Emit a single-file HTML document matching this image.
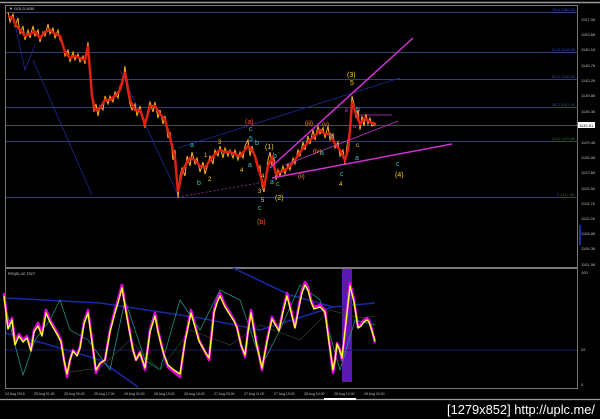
<!DOCTYPE html>
<html><head><meta charset="utf-8"><style>
html,body{margin:0;padding:0;background:#000;width:600px;height:419px;overflow:hidden}
svg{display:block}
text{font-family:"Liberation Sans",sans-serif}
</style></head><body>
<svg width="600" height="419" viewBox="0 0 600 419" xmlns="http://www.w3.org/2000/svg">
<rect width="600" height="419" fill="#000"/>
<line x1="0" y1="2.5" x2="600" y2="2.5" stroke="#9a9a9a" stroke-width="1.5"/>
<rect x="5.5" y="5.5" width="572" height="262" fill="none" stroke="#777" stroke-width="1"/>
<g stroke="#343f78" stroke-width="1">
<line x1="6" y1="12.5" x2="578" y2="12.5"/>
<line x1="6" y1="52.5" x2="578" y2="52.5"/>
<line x1="6" y1="79.5" x2="578" y2="79.5"/>
<line x1="6" y1="107.5" x2="578" y2="107.5"/>
<line x1="6" y1="141.5" x2="578" y2="141.5"/>
<line x1="6" y1="197.5" x2="578" y2="197.5"/>
</g>
<line x1="6" y1="125.5" x2="578" y2="125.5" stroke="#999" stroke-width="0.6"/>
<g fill="#3050b0" font-size="4">
<text x="552" y="11">76.4 1160.25</text>
<text x="552" y="51">61.8 1149.95</text>
<text x="552" y="78">50.0 1140.63</text>
<text x="552" y="106">38.2 1137.40</text>
<text x="552" y="140">23.6 1129.85</text>
<text x="557" y="196">0 1117.35</text>
</g>
<g stroke="#1a2a9a" stroke-width="0.8" fill="none">
<polyline points="14,20 25,70 35,45"/>
<line x1="33" y1="60" x2="92" y2="195"/>
<line x1="120" y1="70" x2="178" y2="195"/>
<line x1="178" y1="148" x2="400" y2="78"/>
</g>
<line x1="178" y1="197" x2="265" y2="182" stroke="#a030a0" stroke-width="0.8" stroke-dasharray="2,2"/>
<g fill="none" stroke-linejoin="miter">
<polyline stroke="#ffb020" stroke-width="1" points="8,12 10,22 13,14 15,26 18,18 20,34 23,26 25,40 28,30 30,38 33,26 35,36 38,30 40,42 43,32 45,36 48,24 50,34 53,28 55,38 58,30 60,40 63,45 65,56 68,50 70,62 73,52 75,60 78,54 80,62 83,56 85,64 88,42 90,70 92,98 94,112 96,104 98,116 100,106 103,110 105,96 108,104 110,96 113,102 115,92 118,98 120,86 123,80 125,66 127,88 130,104 132,110 135,104 137,116 140,106 143,120 145,128 148,110 150,102 153,112 155,102 158,118 160,110 163,124 165,116 168,138 170,132 173,160 175,150 178,198 180,176 182,168 185,176 187,156 190,166 192,152 195,164 197,158 200,172 203,162 205,174 208,164 210,156 213,164 215,150 218,156 220,146 223,158 225,148 228,156 230,150 233,158 235,150 238,160 240,152 243,158 245,146 248,140 250,156 252,146 255,158 258,170 260,166 262,186 264,192 266,176 268,160 270,152 272,166 274,158 276,180 278,170 280,176 283,166 285,174 288,164 290,170 293,158 295,164 298,150 300,156 303,142 305,150 308,136 310,144 313,130 315,140 318,126 320,134 323,128 325,138 328,126 330,140 333,134 335,148 338,142 340,156 343,150 345,164 347,146 350,128 352,96 354,104 356,118 358,110 360,130 362,116 364,126 366,114 368,124 370,118 372,126 376,124"/>
<polyline stroke="#e02010" stroke-width="2.5" points="8,16 13,18 15,24 20,30 25,36 30,34 35,32 40,38 45,32 50,30 55,34 60,36 65,52 70,58 75,56 80,58 85,60 88,46 92,96 95,110 100,108 105,100 110,100 115,96 120,90 125,72 130,100 135,110 140,110 145,124 150,106 155,106 160,114 165,120 170,138 175,158 178,192 182,172 187,162 190,158 195,160 200,166 205,168 210,160 215,154 220,150 225,152 230,152 235,154 240,156 245,150 248,146 252,150 255,156 260,174 264,188 268,166 272,158 276,174 280,172 285,170 290,166 295,160 300,152 305,146 310,140 315,136 320,130 325,134 330,134 335,144 340,150 345,160 348,150 350,130 352,102 356,114 360,124 365,118 370,122 376,124"/>
</g>
<g stroke="#d030d0" fill="none">
<line x1="270" y1="168" x2="413" y2="38" stroke-width="1.5"/>
<line x1="272" y1="178" x2="452" y2="144" stroke-width="1.5"/>
<line x1="285" y1="165" x2="398" y2="121" stroke-width="0.8"/>
<line x1="356" y1="115" x2="392" y2="115" stroke-width="0.8"/>
</g>
<g font-size="7" font-family="Liberation Serif,serif">
<text x="245" y="124" fill="#ff5020">(a)</text>
<text x="257" y="224" fill="#ff5020">(b)</text>
<text x="347" y="77" fill="#ffd020">(3)</text>
<text x="395" y="177" fill="#ffd020">(4)</text>
<text x="265" y="149" fill="#ffd020">(1)</text>
<text x="275" y="200" fill="#ffd020">(2)</text>
<text x="350" y="85" fill="#ffd020">5</text>
<text x="396" y="166" fill="#40c0c0">c</text>
<text x="190" y="147" fill="#40c0c0">a</text>
<text x="197" y="185" fill="#40c0c0">b</text>
<text x="249" y="131" fill="#40c0c0">c</text>
<text x="249" y="141" fill="#40c0c0">5</text>
<text x="255" y="145" fill="#40c0c0">b</text>
<text x="273" y="158" fill="#40c0c0">b</text>
<text x="248" y="167" fill="#40c0c0">a</text>
<text x="258" y="210" fill="#40c0c0">c</text>
<text x="270" y="184" fill="#40c0c0">a</text>
<text x="276" y="186" fill="#40c0c0">c</text>
<text x="330" y="138" fill="#40c0c0">b</text>
<text x="340" y="176" fill="#40c0c0">c</text>
<text x="355" y="160" fill="#40c0c0">a</text>
<text x="320" y="155" fill="#40c0c0">a</text>
<text x="218" y="144" fill="#ffd020" font-size="6">3</text>
<text x="204" y="157" fill="#ffd020" font-size="6">1</text>
<text x="208" y="181" fill="#ffd020" font-size="6">2</text>
<text x="240" y="172" fill="#ffd020" font-size="6">4</text>
<text x="261" y="178" fill="#ffd020" font-size="6">4</text>
<text x="258" y="193" fill="#ffd020" font-size="6">3</text>
<text x="261" y="202" fill="#ffd020" font-size="6">5</text>
<text x="339" y="186" fill="#ffd020" font-size="6">4</text>
<text x="305" y="125" fill="#ff9020" font-size="6">(iii)</text>
<text x="322" y="126" fill="#ff9020" font-size="6">(v)</text>
<text x="313" y="153" fill="#ff9020" font-size="6">(iv)</text>
<text x="298" y="178" fill="#ff9020" font-size="6">(ii)</text>
<text x="345" y="112" fill="#d030d0" font-size="5">iii</text>
<text x="353" y="128" fill="#d030d0" font-size="5">iv</text>
<text x="356" y="112" fill="#40c0c0">b</text>
<text x="356" y="147" fill="#ffd020" font-size="6">c</text>
</g>
<g fill="#bbb" font-size="4">
<text x="581" y="21">1157.06</text><text x="581" y="36">1153.66</text><text x="581" y="51">1150.16</text>
<text x="581" y="67">1146.76</text><text x="581" y="82">1143.26</text><text x="581" y="97">1139.86</text>
<text x="581" y="113">1136.36</text><text x="581" y="144">1129.46</text><text x="581" y="159">1126.06</text>
<text x="581" y="174">1122.66</text><text x="581" y="190">1119.36</text><text x="581" y="205">1115.76</text>
<text x="581" y="220">1112.26</text><text x="581" y="235">1108.86</text><text x="581" y="250">1105.36</text>
<text x="581" y="266">1101.96</text><text x="581" y="274">100</text><text x="581" y="351">32</text><text x="581" y="386">0</text>
</g>
<rect x="578" y="122" width="17" height="6" fill="#fff"/>
<text x="579" y="127" fill="#000" font-size="4">1132.51</text>
<line x1="580" y1="225" x2="580" y2="245" stroke="#2040c0" stroke-width="1.5"/>
<text x="9" y="10" fill="#ccc" font-size="4">▼ GOLD,M30</text>
<rect x="5.5" y="268.5" width="572" height="120" fill="none" stroke="#777" stroke-width="1"/>
<text x="8" y="275" fill="#ccc" font-size="4">RSI(5) 42.7927</text>
<rect x="342" y="269" width="10" height="113" fill="#5a1ab0"/>
<line x1="6" y1="350" x2="577" y2="350" stroke="#141a6a" stroke-width="1"/>
<g fill="none" stroke="#1a28a8" stroke-width="1.5">
<polyline points="6,298 100,303 200,318 260,330 333,307 375,303"/>
<polyline points="6,333 50,345 100,360 138,387"/>
<polyline points="233,268 290,295 333,307"/>
</g>
<polyline fill="none" stroke="#20a090" stroke-width="0.7" points="4,300 15,345 23,375 35,340 50,320 60,300 70,330 88,340 110,370 125,300 145,360 160,370 180,300 200,330 220,290 240,300 262,365 280,330 300,285 320,300 340,370 355,320 375,325"/>
<polyline fill="none" stroke="#304030" stroke-width="0.7" points="70,372 100,368 130,340 160,370 190,330 230,345 260,325 300,340 330,310 360,318 375,316"/>
<polyline fill="none" stroke="#e000e0" stroke-width="2.6" stroke-linejoin="round" points="4,293 8,327 12,318 15,343 19,334 23,340 27,336 31,350 34,330 38,323 42,334 46,310 50,320 54,327 58,334 61,340 64,360 67,377 70,360 73,350 77,355 80,347 84,322 88,310 92,340 96,373 100,364 105,360 110,330 115,310 118,300 122,285 126,310 130,333 133,350 136,360 140,352 145,370 150,330 155,313 158,330 161,343 164,355 168,367 174,372 180,377 185,340 191,310 195,325 199,340 204,350 209,360 212,330 214,310 217,300 220,293 225,305 230,313 234,320 237,327 241,345 245,357 248,330 251,310 256,340 262,370 267,340 272,317 276,325 279,330 283,310 287,293 291,310 295,327 299,305 302,290 305,282 308,287 311,300 314,307 320,305 325,310 329,340 333,373 335,360 337,343 340,350 342,360 346,320 350,283 354,300 358,327 361,324 364,320 367,318 369,320 372,330 375,343"/>
<polyline fill="none" stroke="#ffff30" stroke-width="1.4" stroke-linejoin="round" points="4,296 8,329 12,320 15,345 19,336 23,342 27,338 31,351 34,332 38,326 42,336 46,313 50,322 54,329 58,336 61,342 64,360 67,374 70,360 73,351 77,356 80,348 84,324 88,313 92,342 96,370 100,363 105,360 110,332 115,313 118,303 122,288 126,312 130,334 133,350 136,360 140,353 145,368 150,332 155,316 158,332 161,344 164,355 168,365 174,370 180,374 185,342 191,313 195,327 199,341 204,350 209,358 212,332 214,313 217,303 220,296 225,307 230,315 234,321 237,328 241,345 245,355 248,332 251,313 256,342 262,368 267,342 272,319 276,326 279,331 283,312 287,296 291,312 295,328 299,307 302,293 305,285 308,290 311,302 314,309 320,307 325,312 329,342 333,370 335,360 337,344 340,351 342,358 346,322 350,286 354,302 358,328 361,326 364,322 367,320 369,322 372,331 375,341"/>
<g fill="#bbb" font-size="3.5">
<text x="5" y="395">24 Aug 2015</text><text x="34" y="395">25 Aug 01:00</text><text x="64" y="395">25 Aug 09:00</text>
<text x="94" y="395">25 Aug 17:00</text><text x="124" y="395">26 Aug 02:00</text><text x="154" y="395">26 Aug 10:00</text>
<text x="184" y="395">26 Aug 18:00</text><text x="214" y="395">27 Aug 03:00</text><text x="244" y="395">27 Aug 11:00</text>
<text x="274" y="395">27 Aug 19:00</text><text x="304" y="395">28 Aug 04:00</text><text x="334" y="395">28 Aug 12:00</text>
<text x="364" y="395">28 Aug 20:00</text>
</g>
<line x1="0" y1="399.5" x2="600" y2="399.5" stroke="#9a9a9a" stroke-width="1.2"/>
<rect x="324" y="398" width="32" height="2" fill="#fff"/>
<text x="595" y="414" fill="#fff" font-size="13" text-anchor="end" textLength="148" lengthAdjust="spacingAndGlyphs" font-family="Liberation Sans Narrow,Liberation Sans,sans-serif">[1279x852] http://uplc.me/</text>
</svg>
</body></html>
